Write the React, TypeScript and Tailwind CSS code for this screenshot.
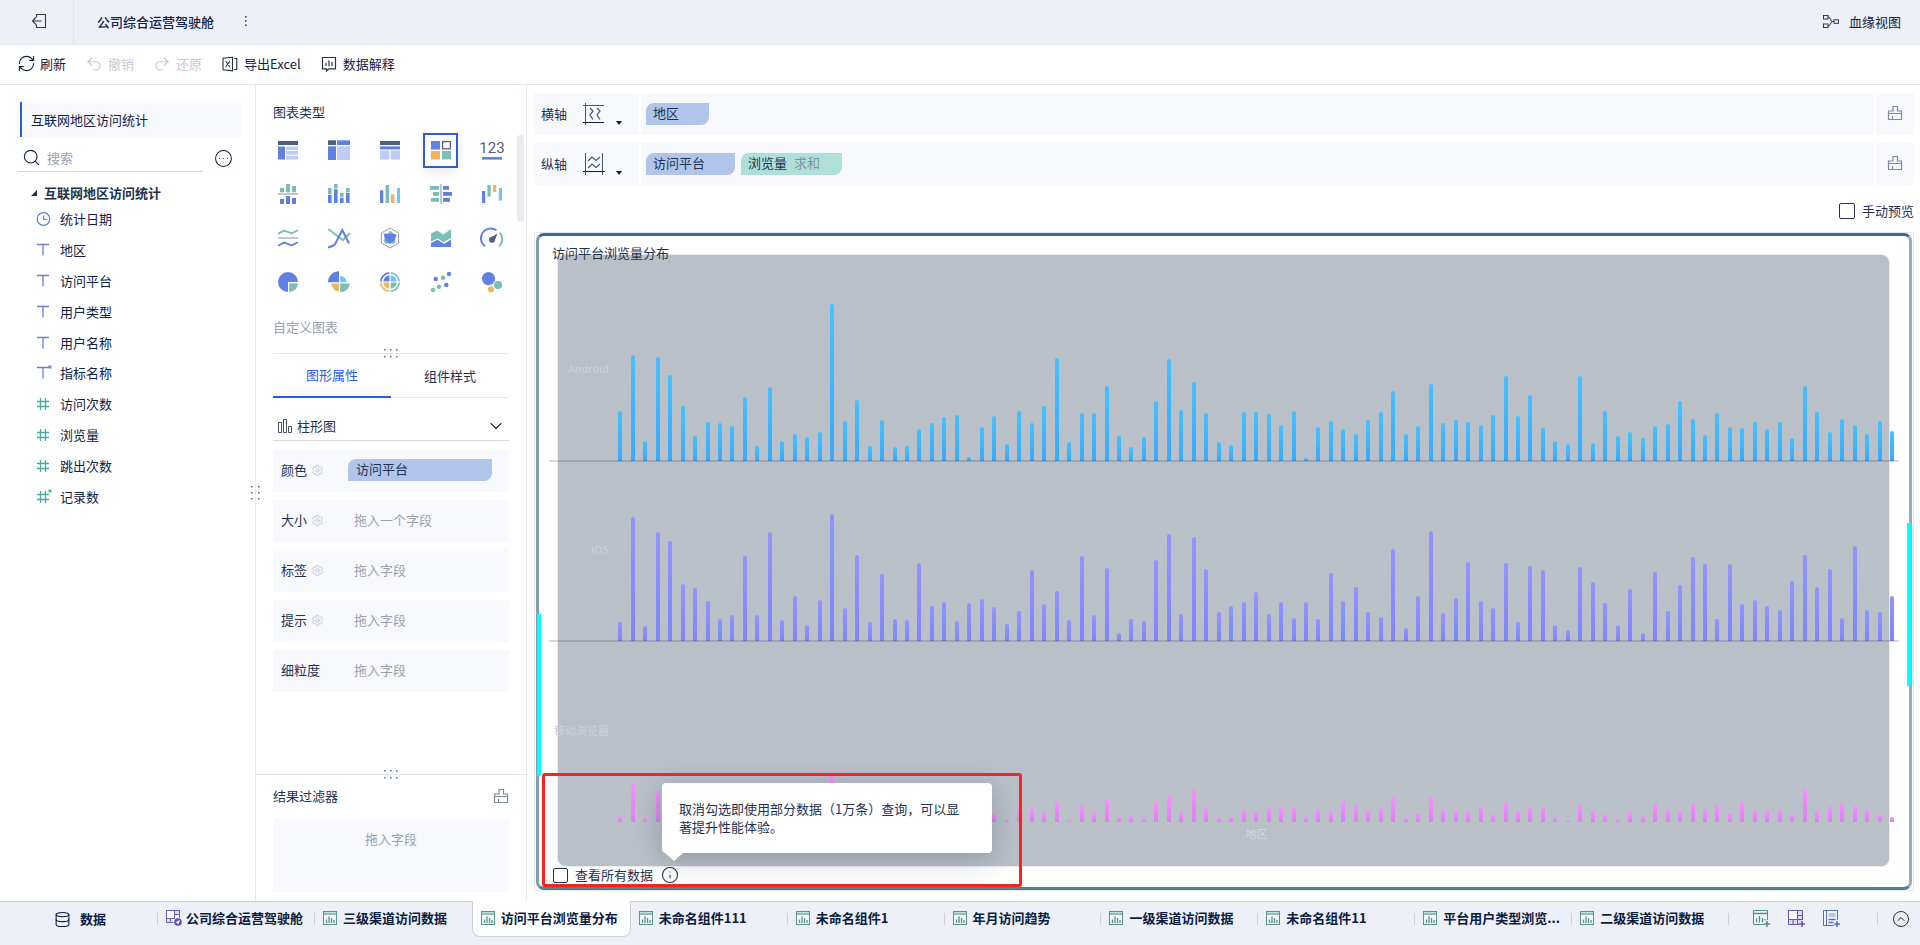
import React from "react";
import {
  ChevronDown,
  ChevronUp,
  CircleEllipsis,
  Database,
  Info,
  Redo2,
  RefreshCw,
  Search,
  Settings,
  Undo2,
} from "lucide-react";

type Children = { children: React.ReactNode };

/* ---------- data ---------- */

const ANDROID = [
  50, 106, 20, 104, 86, 55, 25, 39, 38, 35, 64, 15, 74, 20, 27, 24, 29, 157, 40, 61, 15, 41, 14, 15, 32, 38, 44, 46, 4,
  34, 45, 17, 50, 38, 55, 103, 19, 48, 48, 75, 25, 14, 24, 60, 102, 51, 79, 48, 19, 16, 49, 49, 47, 36, 50, 3, 34, 40,
  32, 27, 41, 49, 70, 27, 35, 77, 38, 41, 39, 36, 46, 85, 45, 66, 33, 20, 17, 85, 18, 50, 25, 29, 23, 35, 37, 60, 42,
  26, 48, 34, 33, 39, 32, 39, 23, 75, 49, 29, 42, 36, 27, 40, 30,
];

const IOS = [
  19, 125, 15, 110, 101, 57, 53, 40, 22, 26, 86, 26, 110, 21, 45, 16, 41, 128, 33, 87, 19, 67, 22, 21, 79, 35, 39, 20,
  38, 42, 34, 17, 30, 71, 37, 50, 21, 86, 26, 73, 8, 22, 20, 82, 108, 27, 105, 72, 29, 35, 39, 49, 27, 39, 23, 39, 22,
  68, 40, 54, 29, 24, 93, 13, 45, 111, 28, 43, 80, 40, 33, 79, 19, 75, 71, 16, 11, 74, 59, 38, 16, 52, 8, 69, 30, 56,
  85, 78, 22, 78, 37, 41, 35, 31, 60, 87, 54, 72, 23, 96, 31, 29, 45,
];

const MOBILE = [
  6, 38, 4, 31, 27, 18, 15, 12, 8, 9, 22, 7, 30, 7, 12, 6, 12, 47, 12, 25, 6, 20, 7, 7, 22, 11, 12, 8, 5, 12, 8, 3, 15,
  14, 10, 20, 2, 17, 10, 22, 5, 6, 4, 20, 26, 10, 33, 14, 4, 5, 12, 10, 14, 14, 15, 5, 13, 10, 21, 16, 12, 14, 25, 4, 9,
  25, 13, 10, 11, 16, 8, 20, 11, 15, 15, 5, 2, 17, 11, 8, 3, 10, 6, 19, 12, 11, 19, 13, 17, 9, 20, 12, 12, 13, 8, 33,
  11, 16, 19, 16, 13, 8, 5,
];

const AXIS_MAX = 181;

const SERIES = [
  { name: "Android", values: ANDROID, fill: "bg-linear-to-b from-[#45c1ff] to-[#3ba9fd]", axis: true },
  { name: "IOS", values: IOS, fill: "bg-linear-to-b from-[#8f96ff] to-[#7e85fb]", axis: true },
  { name: "移动浏览器", values: MOBILE, fill: "bg-linear-to-b from-[#f78eff] to-[#dc80f3]", axis: false },
];

const FIELDS = [
  { name: "统计日期", kind: "date" },
  { name: "地区", kind: "text" },
  { name: "访问平台", kind: "text" },
  { name: "用户类型", kind: "text" },
  { name: "用户名称", kind: "text" },
  { name: "指标名称", kind: "textStar" },
  { name: "访问次数", kind: "num" },
  { name: "浏览量", kind: "num" },
  { name: "跳出次数", kind: "num" },
  { name: "记录数", kind: "numStar" },
];

const TABS = [
  { name: "公司综合运营驾驶舱", board: true },
  { name: "三级渠道访问数据" },
  { name: "访问平台浏览量分布", active: true },
  { name: "未命名组件111" },
  { name: "未命名组件1" },
  { name: "年月访问趋势" },
  { name: "一级渠道访问数据" },
  { name: "未命名组件11" },
  { name: "平台用户类型浏览..." },
  { name: "二级渠道访问数据" },
];

/* ---------- icons ---------- */

const D = "#4e5f80";
const B = "#6181e2";
const L = "#bfccf5";
const T = "#7bbeb6";
const O = "#eeb55f";
const S = "#70c4ef";
const G = "#c2c6d2";

function R({ x, y, w, h, f }: { x: number; y: number; w: number; h: number; f: string }) {
  return <rect x={x} y={y} width={w} height={h} fill={f} />;
}

function Glyph({ children }: Children) {
  return (
    <svg viewBox="0 0 24 24" className="size-6 shrink-0" fill="none" aria-hidden="true">
      {children}
    </svg>
  );
}

const CHARTS: { name: string; icon: React.ReactNode }[] = [
  {
    name: "分组表",
    icon: (
      <Glyph>
        <R x={2} y={3} w={20} h={4} f={D} />
        <R x={2} y={8.5} w={7} h={13} f={B} />
        <R x={10} y={8.5} w={12} h={3.5} f={L} />
        <R x={10} y={13} w={12} h={3.7} f={L} />
        <R x={10} y={17.7} w={12} h={3.8} f={L} />
      </Glyph>
    ),
  },
  {
    name: "交叉表",
    icon: (
      <Glyph>
        <R x={1} y={2.3} w={8} h={4.7} f={D} />
        <R x={10} y={2.3} w={13} h={4.7} f={B} />
        <R x={1} y={8.3} w={8} h={13.7} f={B} />
        <R x={10} y={8.3} w={13} h={13.7} f={L} />
      </Glyph>
    ),
  },
  {
    name: "明细表",
    icon: (
      <Glyph>
        <R x={2} y={3} w={20} h={4} f={D} />
        <R x={2} y={8.3} w={20} h={3.2} f={B} />
        <R x={2} y={12.6} w={9.3} h={9} f={L} />
        <R x={12.7} y={12.6} w={9.3} h={9} f={L} />
      </Glyph>
    ),
  },
  {
    name: "自定义图表",
    icon: (
      <Glyph>
        <R x={2} y={3} w={9} h={8.6} f={B} />
        <rect x={13.6} y={3.6} width={7.8} height={7.2} stroke={D} strokeWidth="1.3" fill="#fff" />
        <R x={2} y={13} w={9} h={8.4} f={O} />
        <R x={13} y={13} w={9} h={8.4} f={T} />
      </Glyph>
    ),
  },
  {
    name: "指标卡",
    icon: (
      <Glyph>
        <text
          x="12"
          y="15"
          textAnchor="middle"
          fontSize="15"
          fontFamily="'Liberation Sans Narrow', 'Roboto', sans-serif"
          fill={D}
        >
          123
        </text>
        <R x={2} y={19} w={20} h={2.6} f={B} />
      </Glyph>
    ),
  },
  {
    name: "对比柱形图",
    icon: (
      <Glyph>
        <R x={4} y={6} w={4} h={4.3} f={T} />
        <R x={10} y={2} w={4} h={8.3} f={T} />
        <R x={16} y={4} w={4} h={6.3} f={T} />
        <R x={2} y={11} w={20} h={2} f={G} />
        <R x={4} y={17} w={4} h={5} f={B} />
        <R x={10} y={14} w={4} h={8} f={B} />
        <R x={16} y={16} w={4} h={6} f={B} />
      </Glyph>
    ),
  },
  {
    name: "堆积柱形图",
    icon: (
      <Glyph>
        <R x={1} y={6} w={3.6} h={6.3} f={T} />
        <R x={1} y={13} w={3.6} h={8} f={B} />
        <R x={7} y={2} w={3.6} h={4.6} f={T} />
        <R x={7} y={7.3} w={3.6} h={13.7} f={B} />
        <R x={13} y={11} w={3.6} h={4.3} f={T} />
        <R x={13} y={16} w={3.6} h={5} f={B} />
        <R x={19} y={6} w={3.6} h={4.4} f={T} />
        <R x={19} y={11} w={3.6} h={10} f={B} />
      </Glyph>
    ),
  },
  {
    name: "分区柱形图",
    icon: (
      <Glyph>
        <R x={2} y={8.3} w={3.3} h={12.7} f={B} />
        <R x={7.6} y={3} w={3.4} h={18} f={T} />
        <R x={13} y={12.3} w={3.4} h={8.7} f={O} />
        <R x={19} y={6} w={3} h={15} f={S} />
      </Glyph>
    ),
  },
  {
    name: "对比条形图",
    icon: (
      <Glyph>
        <R x={11} y={2} w={2} h={20} f={G} />
        <R x={1} y={4} w={9} h={3.8} f={T} />
        <R x={4} y={10} w={6} h={3.8} f={T} />
        <R x={2} y={16} w={8} h={3.8} f={T} />
        <R x={14} y={4} w={6} h={3.8} f={B} />
        <R x={14} y={10} w={9} h={3.8} f={B} />
        <R x={14} y={16} w={7} h={3.8} f={B} />
      </Glyph>
    ),
  },
  {
    name: "瀑布图",
    icon: (
      <Glyph>
        <R x={2} y={9} w={3.2} h={12} f={B} />
        <R x={7.4} y={3} w={3.3} h={11.7} f={T} />
        <R x={13} y={3} w={3.3} h={7} f={O} />
        <R x={18.8} y={6} w={3.2} h={12.6} f={S} />
      </Glyph>
    ),
  },
  {
    name: "折线图",
    icon: (
      <Glyph>
        <path d="M2 7.8 8 4.6l7.7 2.7L22 4.2" stroke={T} strokeWidth="1.8" />
        <R x={2} y={11} w={20} h={2} f={G} />
        <path d="M2 19.8 8 16.6l7.7 2.7 6.3-3" stroke={B} strokeWidth="1.8" />
      </Glyph>
    ),
  },
  {
    name: "组合图",
    icon: (
      <Glyph>
        <path d="M1.3 3 16 14.2 23 7" stroke={T} strokeWidth="2" />
        <path d="M1 21.5c4.2-1.2 6-1.6 7.4-4L15.3 4 22 17.5" stroke={B} strokeWidth="2" />
      </Glyph>
    ),
  },
  {
    name: "雷达图",
    icon: (
      <Glyph>
        <path d="M12 2l8.6 5v10L12 22l-8.6-5V7z" stroke="#8f9bb2" strokeWidth="1" />
        <path d="M12 4.5l6 5-1 8H7l-1.5-3z" fill={T} />
        <path d="M5.5 7.5l13 .8L16 15l-4.2 3-4.6-4z" fill={B} />
      </Glyph>
    ),
  },
  {
    name: "面积图",
    icon: (
      <Glyph>
        <path d="M2 7.5l6-3 6.5 4L22 3v9l-7.5 4.2L9 12.4l-7 3.2z" fill={T} />
        <path d="M2 17l6.5-3.2 6.5 4 7-4V21H2z" fill={B} />
      </Glyph>
    ),
  },
  {
    name: "仪表盘",
    icon: (
      <Glyph>
        <path d="M5 20.3A9.6 9.6 0 0 1 16.5 4.3" stroke={B} strokeWidth="1.9" />
        <path d="M19.6 6.6a9.6 9.6 0 0 1-.6 13.7" stroke={T} strokeWidth="1.9" />
        <circle cx="12" cy="13.8" r="3" fill={D} />
        <path d="M10.8 11.5 17.5 7.5l-3 7.5z" fill={D} />
      </Glyph>
    ),
  },
  {
    name: "饼图",
    icon: (
      <Glyph>
        <path d="M12 12V2a10 10 0 1 0 0 20z" fill={B} />
        <path d="M12 2a10 10 0 0 1 10 10H12z" fill={B} />
        <path d="M13.2 13.2H22a9 9 0 0 1-8.8 8.8z" fill={T} />
      </Glyph>
    ),
  },
  {
    name: "玫瑰图",
    icon: (
      <Glyph>
        <path d="M12 12.3H1A11 11 0 0 1 12 1.3z" fill={B} />
        <path d="M13.2 12.3V6a6 6 0 0 1 6.2 6.3z" fill={S} />
        <path d="M13.2 13.5H23a10 10 0 0 1-9.8 8.7z" fill={T} />
        <path d="M12 13.5V21.5a8 8 0 0 1-7.6-8z" fill={O} />
      </Glyph>
    ),
  },
  {
    name: "多层饼图",
    icon: (
      <Glyph>
        <path d="M11.3 2.9A9.2 9.2 0 0 0 2.8 11.3" stroke={B} strokeWidth="1.8" />
        <path d="M12.7 2.9a9.2 9.2 0 0 1 8.5 8.4" stroke={S} strokeWidth="1.8" />
        <path d="M21.2 12.7a9.2 9.2 0 0 1-8.5 8.5" stroke={T} strokeWidth="1.8" />
        <path d="M2.8 12.7a9.2 9.2 0 0 0 8.5 8.5" stroke={O} strokeWidth="1.8" />
        <path d="M11.4 11.4H5.3a6.600 6.600 0 0 1 6.100-6.100z" fill={B} />
        <path d="M12.6 11.4V5.3a6.600 6.600 0 0 1 6.100 6.100z" fill={S} />
        <path d="M12.6 12.6h6.100a6.600 6.600 0 0 1-6.100 6.100z" fill={T} />
        <path d="M11.4 12.6v6.100a6.600 6.600 0 0 1-6.100-6.100z" fill={O} />
      </Glyph>
    ),
  },
  {
    name: "散点图",
    icon: (
      <Glyph>
        <circle cx="6.7" cy="9" r="2.2" fill={B} />
        <circle cx="14" cy="7.7" r="2.2" fill={T} />
        <circle cx="20" cy="4" r="2.2" fill={B} />
        <circle cx="10" cy="16.7" r="2.2" fill={T} />
        <circle cx="17.3" cy="15" r="2.2" fill={B} />
        <circle cx="4" cy="20" r="2.2" fill={T} />
      </Glyph>
    ),
  },
  {
    name: "气泡图",
    icon: (
      <Glyph>
        <circle cx="8.5" cy="8.6" r="6.6" fill={B} />
        <circle cx="18" cy="15" r="4.1" fill={T} />
        <circle cx="11" cy="19.3" r="3" fill={O} />
      </Glyph>
    ),
  },
];

function BrushIcon() {
  return (
    <svg viewBox="0 0 16 16" className="size-4" fill="none" stroke="#7d89a1" strokeWidth="1.2" aria-hidden="true">
      <path d="M1.500 6V14.500h13V6h-4V1.500H6V6z" />
      <path d="M1.500 8.500h13M5.500 14v-3" />
    </svg>
  );
}

function ClockIcon() {
  return (
    <svg viewBox="0 0 16 16" className="size-4" fill="none" stroke="#6280cf" strokeWidth="1.2" aria-hidden="true">
      <circle cx="7.500" cy="8" r="6.300" />
      <path d="M7.500 4.500V8.500h3.500" />
    </svg>
  );
}

function TextIcon({ star }: { star?: boolean }) {
  return (
    <svg viewBox="0 0 16 16" className="size-4" fill="none" stroke="#6a80cc" strokeWidth="1.3" aria-hidden="true">
      <path d="M1 2.500h12M7 2.500v11" />
      {star && <path d="M14 0v4M12.300 1l3.400 2M15.700 1l-3.400 2" strokeWidth="1" />}
    </svg>
  );
}

function HashIcon({ star }: { star?: boolean }) {
  return (
    <svg viewBox="0 0 16 16" className="size-4" fill="none" stroke="#45ada0" strokeWidth="1.3" aria-hidden="true">
      <path d="M1 5.500h12M1 10.500h12M4.500 2v12M9.500 2v12" />
      {star && <path d="M14 0v4M12.300 1l3.400 2M15.700 1l-3.400 2" strokeWidth="1" />}
    </svg>
  );
}

function FieldIcon({ kind }: { kind: string }) {
  if (kind === "date") return <ClockIcon />;
  if (kind.startsWith("text")) return <TextIcon star={kind === "textStar"} />;
  return <HashIcon star={kind === "numStar"} />;
}

function SheetIcon() {
  return (
    <svg viewBox="0 0 14 14" className="size-[14px] shrink-0" fill="none" stroke="#5b9389" aria-hidden="true">
      <rect x=".5" y=".5" width="13" height="13" fill="#f1f8f7" />
      <rect x=".5" y=".5" width="13" height="2.6" fill="#bfe0da" />
      <path d="M3.500 12V8.500M6 12V5.500M8.500 12V7M11 12V9" strokeWidth="1.3" />
    </svg>
  );
}

function BoardIcon() {
  return (
    <svg viewBox="0 0 16 16" className="size-4 shrink-0" fill="none" stroke="#6c5fb4" aria-hidden="true">
      <path d="M.5.5h8v8h-8zM8.500.5h5v4h-5zM.5 8.500h4v4h-4zM4.500 8.500v4h3M13.500 4.500v3" fill="#dcd8f5" />
      <rect x=".5" y=".5" width="8" height="8" fill="#fff" />
      <circle cx="12" cy="12" r="3.800" fill="#5f4fb8" stroke="none" />
      <path d="M9.800 12.200 14.200 9.800 12.400 14.300z" fill="#fff" stroke="none" />
    </svg>
  );
}

/* ---------- small parts ---------- */

function Pill({ tone = "blue", className = "", children }: Children & { tone?: "blue" | "green"; className?: string }) {
  const bg = tone === "blue" ? "bg-[#b0c5e9]" : "bg-[#aee0d9]";
  return (
    <div className={`flex h-[22px] items-center rounded-tl-lg rounded-br-lg pb-[2px] ${bg} ${className}`}>
      {children}
    </div>
  );
}

function Dots({ vertical = false }: { vertical?: boolean }) {
  return (
    <svg
      viewBox={vertical ? "0 0 10 16" : "0 0 16 10"}
      className={vertical ? "h-4 w-[10px]" : "h-[10px] w-4"}
      fill="#5a6a88"
      aria-hidden="true"
    >
      {vertical
        ? [0, 1, 2].flatMap((i) => [
            <rect key={`a${i}`} x="1" y={1 + i * 6} width="1.500" height="1.500" />,
            <rect key={`b${i}`} x="8" y={1 + i * 6} width="1.500" height="1.500" />,
          ])
        : [0, 1, 2].flatMap((i) => [
            <rect key={`a${i}`} x={1 + i * 6} y="1" width="1.500" height="1.500" />,
            <rect key={`b${i}`} x={1 + i * 6} y="8" width="1.500" height="1.500" />,
          ])}
    </svg>
  );
}

function ToolButton({ icon, label, disabled }: { icon: React.ReactNode; label: string; disabled?: boolean }) {
  return (
    <button type="button" disabled={disabled} className="flex items-center gap-[6px] disabled:text-[#c6cbd4]">
      <span className="flex w-4 justify-center">{icon}</span>
      <span>{label}</span>
    </button>
  );
}

function AxisRow({ label, icon, children }: Children & { label: string; icon: React.ReactNode }) {
  return (
    <div className="flex h-[42px] gap-[2px]">
      <div className="flex w-[105px] items-center bg-[#f8f9fd] pl-[7px]">
        <span>{label}</span>
        <button type="button" aria-label={`${label}设置`} className="ml-4 flex items-end gap-[11px]">
          {icon}
          <svg viewBox="0 0 6 4" className="h-1 w-[6px]" fill="#0d2148" aria-hidden="true">
            <path d="M0 0h6L3 4z" />
          </svg>
        </button>
      </div>
      <div className="flex min-w-0 flex-1 items-center gap-[6px] bg-[#f8f9fd] pl-[5px]">{children}</div>
      <button type="button" aria-label={`清空${label}`} className="flex w-[38px] items-center justify-center bg-[#f8f9fd] pb-[2px]">
        <BrushIcon />
      </button>
    </div>
  );
}

function AttrRow({ label, gear = true, children }: Children & { label: string; gear?: boolean }) {
  return (
    <div className="flex h-[42px] items-center bg-[#f8f9fd] px-2 pb-[2px]">
      <div className="flex w-[67px] items-center gap-1">
        <span>{label}</span>
        {gear && <Settings className="size-[13px] text-[#bcc1cc]" strokeWidth={1.6} />}
      </div>
      {children}
    </div>
  );
}

/* ---------- regions ---------- */

function Header() {
  return (
    <header className="flex h-[45px] shrink-0 items-center border-b border-[#e1e5ee] bg-[#edf0f6]">
      <button
        type="button"
        aria-label="退出"
        className="flex h-full w-[74px] items-center justify-center border-r border-[#e1e5ee] pb-[2px] pl-1"
      >
        <svg viewBox="0 0 16 16" className="size-4" fill="none" stroke="#2f3848" strokeWidth="1.1" aria-hidden="true">
          <path d="M5.500 4.500v-3h9v13h-9v-3M1.500 8H10.500M4.800 4.500 1.500 8l3.300 3.500" />
        </svg>
      </button>
      <h1 className="pl-[23px] font-medium">公司综合运营驾驶舱</h1>
      <button type="button" aria-label="更多" className="ml-[30px] pb-[2px]">
        <svg viewBox="0 0 4 12" className="h-3 w-1" fill="#3b465c" aria-hidden="true">
          <rect x="1" y="1" width="1.600" height="1.600" />
          <rect x="1" y="5.200" width="1.600" height="1.600" />
          <rect x="1" y="9.400" width="1.600" height="1.600" />
        </svg>
      </button>
      <button type="button" className="mr-[19px] ml-auto flex items-center gap-[9px]">
        <svg viewBox="0 0 18 16" className="h-4 w-[18px]" fill="none" stroke="#2c3447" aria-hidden="true">
          <rect x="1.500" y="1.500" width="4.500" height="3.500" />
          <rect x="1.500" y="10" width="4.500" height="3.500" />
          <rect x="12" y="5.800" width="4.500" height="3.500" />
          <path d="M6 3.200h1.200l2.800 4.300h2M6 11.800h1.200L10 7.500" />
        </svg>
        <span>血缘视图</span>
      </button>
    </header>
  );
}

function Toolbar() {
  return (
    <div className="flex h-10 shrink-0 items-center border-b border-[#e4e7f0] pr-4 pb-[2px] pl-[18px]">
      <div className="flex items-center gap-5">
        <ToolButton label="刷新" icon={<RefreshCw className="size-[19px] shrink-0" strokeWidth={1.4} />} />
        <ToolButton label="撤销" disabled icon={<Undo2 className="size-[18px] shrink-0" strokeWidth={1.6} />} />
        <ToolButton label="还原" disabled icon={<Redo2 className="size-[18px] shrink-0" strokeWidth={1.6} />} />
        <ToolButton
          label="导出Excel"
          icon={
            <svg viewBox="0 0 16 16" className="size-4" fill="none" stroke="#26304a" strokeWidth="1.1" aria-hidden="true">
              <path d="M10.500 1.200l-9.500 1v11.600l9.500 1zM12.200 2.500h2.600v11h-2.600M3.600 5 8 11M8 5 3.600 11" />
            </svg>
          }
        />
        <ToolButton
          label="数据解释"
          icon={
            <svg viewBox="0 0 16 16" className="size-4" fill="none" stroke="#26304a" strokeWidth="1.200" aria-hidden="true">
              <path d="M1.500 1.500h13v11.300H8L5.500 15v-2.200h-4zM5 10V7M8 10V4.500M11 10V6" />
            </svg>
          }
        />
      </div>
    </div>
  );
}

function DataPanel() {
  return (
    <aside className="relative w-64 shrink-0 border-r border-[#e4e6f0] pt-[17px]">
      <div className="mr-[13px] ml-5 flex h-[35px] items-center border-l-2 border-[#2b5fd9] bg-[#f8f9fd] pl-[9px]">
        互联网地区访问统计
      </div>
      <div className="mt-[7px] mr-[22px] ml-[18px] flex items-center gap-[11px]">
        <label className="flex h-7 w-[188px] items-center gap-[6px] border-b border-[#d5d8e0] pl-1">
          <Search className="size-[19px] shrink-0" strokeWidth={1.4} />
          <input
            type="text"
            aria-label="搜索"
            placeholder="搜索"
            className="w-full min-w-0 bg-transparent leading-5 outline-none placeholder:text-[#9aa2b1]"
          />
        </label>
        <button type="button" aria-label="更多">
          <CircleEllipsis className="size-[19px]" strokeWidth={1.3} />
        </button>
      </div>
      <div className="mt-[10px] flex h-[22px] items-center gap-[7px] pl-[31px] font-bold text-[#23324c]">
        <svg viewBox="0 0 6 6" className="size-[6px]" fill="#23324c" aria-hidden="true">
          <path d="M6 0v6H0z" />
        </svg>
        互联网地区访问统计
      </div>
      <ul className="grid h-[308px] auto-rows-fr">
        {FIELDS.map((f) => (
          <li key={f.name} className="flex items-center gap-2 pl-[36px]">
            <FieldIcon kind={f.kind} />
            {f.name}
          </li>
        ))}
      </ul>
      <div className="absolute top-[400px] -right-[5px]">
        <Dots vertical />
      </div>
    </aside>
  );
}

function ChartPanel() {
  return (
    <section className="flex w-[271px] shrink-0 flex-col border-r border-[#e4e6f0] text-[#1f3254]">
      <h2 className="pt-[17px] pl-[17px] leading-5">图表类型</h2>
      <div className="mt-[6px] flex pr-[2px] pl-[7px]">
        <div className="grid flex-1 grid-cols-5">
          {CHARTS.map((c, i) => (
            <div key={c.name} className="flex h-11 items-center justify-center">
              <button
                type="button"
                aria-label={c.name}
                className={
                  i === 3
                    ? "flex size-[35px] items-center justify-center border-2 border-[#2b5fd9] bg-white shadow-[0_4px_12px_rgba(0,0,0,0.08)]"
                    : "flex size-[35px] items-center justify-center"
                }
              >
                {c.icon}
              </button>
            </div>
          ))}
        </div>
        <div className="mt-[7px] h-[87px] w-[7px] rounded-full bg-[#eaebf2]" />
      </div>
      <div className="relative mr-[17px] ml-[17px] border-b border-[#e6e8ee] pt-[13px] pb-4 leading-5 text-[#9aa2b1]">
        自定义图表
        <div className="absolute -bottom-[5px] left-1/2 -translate-x-1/2">
          <Dots />
        </div>
      </div>
      <div className="mr-[17px] ml-[17px] flex h-11 border-b border-[#e6e8ee]" role="tablist">
        <button
          type="button"
          role="tab"
          aria-selected="true"
          className="h-11 flex-1 border-b-2 border-[#2b5fd9] text-[#2b5fd9]"
        >
          图形属性
        </button>
        <button type="button" role="tab" aria-selected="false" className="flex-1">
          组件样式
        </button>
      </div>
      <button
        type="button"
        className="mt-4 mr-[17px] ml-[17px] flex h-[27px] items-center border-b border-[#d8dbe4] pr-[3px] pb-[2px] pl-[4px]"
      >
        <svg viewBox="0 0 16 16" className="size-4" fill="none" stroke="#43506a" aria-hidden="true">
          <path d="M1.500 4.500h3v10h-3zM6.500 1.500h3v13h-3zM11.500 8.500h3v6h-3z" />
        </svg>
        <span className="ml-1">柱形图</span>
        <ChevronDown className="ml-auto size-5" strokeWidth={1.4} />
      </button>
      <div className="mt-[9px] mr-[17px] ml-[17px] flex flex-col gap-2">
        <AttrRow label="颜色">
          <Pill className="w-[144px] pl-2">访问平台</Pill>
        </AttrRow>
        <AttrRow label="大小">
          <span className="pl-[6px] text-[#9aa2b1]">拖入一个字段</span>
        </AttrRow>
        <AttrRow label="标签">
          <span className="pl-[6px] text-[#9aa2b1]">拖入字段</span>
        </AttrRow>
        <AttrRow label="提示">
          <span className="pl-[6px] text-[#9aa2b1]">拖入字段</span>
        </AttrRow>
        <AttrRow label="细粒度" gear={false}>
          <span className="pl-[6px] text-[#9aa2b1]">拖入字段</span>
        </AttrRow>
      </div>
      <div className="relative mt-auto border-t border-[#e4e6f0] px-[17px] pt-[11px] pb-[9px]">
        <div className="absolute -top-[6px] left-1/2 -translate-x-1/2">
          <Dots />
        </div>
        <div className="flex h-5 items-center justify-between">
          <h2>结果过滤器</h2>
          <button type="button" aria-label="清空结果过滤器">
            <BrushIcon />
          </button>
        </div>
        <div className="mt-[13px] h-[73px] bg-[#f8f9fd] pt-[10px] text-center leading-5 text-[#9aa2b1]">拖入字段</div>
      </div>
    </section>
  );
}

function Band({ name, values, fill, axis }: (typeof SERIES)[number]) {
  return (
    <div className="relative flex min-h-0 flex-1">
      <div className="flex w-[65px] shrink-0 items-center justify-end pr-[5px] pb-1 text-[11px] whitespace-nowrap text-[#cdd3da]">
        {name}
      </div>
      <div className="flex min-w-0 flex-1 items-end">
        {values.map((v, i) => (
          <div key={i} className="flex h-full flex-1 items-end justify-center">
            <div className={`w-1 rounded-t-[2px] ${fill}`} style={{ height: `${(v / AXIS_MAX) * 100}%` }} />
          </div>
        ))}
      </div>
      {axis && <div className="absolute inset-x-0 -bottom-[1px] h-[2px] bg-black/15" />}
    </div>
  );
}

function ChartCard() {
  return (
    <div className="flex min-h-0 flex-1 border border-[#e3e6ee] px-[1px]">
      <div className="relative flex min-w-0 flex-1 flex-col rounded-lg border-[3px] border-t-[#3c6a80] border-r-[#94afb8] border-b-[#54808f] border-l-[#7f9fa9] bg-white px-[10px] pt-[7px] pb-[2px]">
        <div className="absolute top-[19px] right-[20px] bottom-[21px] left-[19px] rounded-lg bg-[#b9c0c8] shadow-[0_0_2px_rgba(140,150,160,0.7)]" />
        <div className="absolute bottom-[111px] -left-[2px] h-[162px] w-1 bg-[#0ff]" />
        <div className="absolute top-[287px] -right-[2px] h-[163px] w-1 bg-[#0ff]" />

        <h2 className="relative pl-[3px] leading-5">访问平台浏览量分布</h2>
        <div className="relative mt-[17px] flex min-h-0 flex-1 flex-col">
          {SERIES.map((s) => (
            <Band key={s.name} {...s} />
          ))}
        </div>
        <div className="relative pl-[65px] text-center text-[11px] leading-[22px] text-[#d3d8de]">地区</div>
        <div className="relative mt-[21px] flex h-5 items-center pl-1">
          <label className="flex items-center gap-[7px]">
            <input type="checkbox" className="size-[15px] appearance-none rounded-[2px] border border-[#1f3254] bg-white" />
            查看所有数据
          </label>
          <button type="button" aria-label="说明" className="ml-2">
            <Info className="size-[18px]" strokeWidth={1.4} />
          </button>
        </div>

        <div
          role="tooltip"
          className="absolute bottom-[34px] left-[123px] w-[330px] rounded bg-white py-[17px] pr-[20px] pl-[17px] leading-[18px] shadow-[0_6px_28px_rgba(20,30,50,0.25)]"
        >
          取消勾选即使用部分数据（1万条）查询，可以显著提升性能体验。
          <svg viewBox="0 0 18 8" className="absolute top-full left-[3px] h-2 w-[18px]" fill="#fff" aria-hidden="true">
            <path d="M0 0h18L9 8z" />
          </svg>
        </div>
        <div className="pointer-events-none absolute bottom-0 left-[3px] h-[114px] w-[480px] rounded-[3px] border-[3px] border-[#fb231c]" />
      </div>
    </div>
  );
}

function Workspace() {
  return (
    <main className="flex min-w-0 flex-1 flex-col pt-2 pr-[6px] pb-[10px] pl-[7px] text-[#1f3254]">
      <div className="flex flex-col gap-2">
        <AxisRow
          label="横轴"
          icon={
            <svg viewBox="0 0 22 22" className="size-[22px]" fill="none" stroke="#43557a" aria-hidden="true">
              <path d="M0 2.500h21M2.500 0v22" />
              <path d="M0 19.500h21" stroke="#0d2148" />
              <path d="M7 5l3 3-3 4 3 4.500M14 5l3 3-3 4 3 4.500" strokeWidth="1.200" />
            </svg>
          }
        >
          <Pill className="w-[63px] pl-[7px]">地区</Pill>
        </AxisRow>
        <AxisRow
          label="纵轴"
          icon={
            <svg viewBox="0 0 22 22" className="size-[22px]" fill="none" stroke="#43557a" aria-hidden="true">
              <path d="M2.500 0v22M19.500 0v22" />
              <path d="M0 18.500h22" stroke="#0d2148" />
              <path d="M5 8l4-4 4 3.500L17 4M5 15l4-4 4 3.500L17 11" strokeWidth="1.200" />
            </svg>
          }
        >
          <Pill className="w-[89px] pl-[7px]">访问平台</Pill>
          <Pill tone="green" className="w-[101px] pl-[7px]">
            浏览量<span className="ml-[7px] text-[#8291a4]">求和</span>
          </Pill>
        </AxisRow>
      </div>
      <div className="flex h-[47px] shrink-0 items-center justify-end pt-1">
        <label className="flex items-center gap-[7px]">
          <input type="checkbox" className="size-4 appearance-none rounded-[2px] border border-[#1f3254] bg-white" />
          手动预览
        </label>
      </div>
      <ChartCard />
    </main>
  );
}

function AddIcon({ kind }: { kind: "chart" | "board" | "report" }) {
  const tone = kind === "chart" ? "#4f9085" : kind === "board" ? "#6555b5" : "#5370b5";
  return (
    <svg viewBox="0 0 18 18" className="size-[18px]" fill="none" stroke={tone} aria-hidden="true">
      {kind === "chart" && (
        <>
          <path d="M11 14.500H.5V.5h14V10" fill="#f1f8f7" />
          <path d="M.5 3.500h14M3.500 12.500v-4M6.500 12.500V6M9.500 12.500V8M12 10.500V9" strokeWidth="1.300" />
        </>
      )}
      {kind === "board" && (
        <>
          <path d="M11 14.500H.5V.5h14V10" fill="#dcd8f7" />
          <path d="M.5.5h9v9h-9z" fill="#fff" />
          <path d="M9.500 5.500h5M5 9.500v5M9.500 9.500v5M9.500 9.500h5" />
        </>
      )}
      {kind === "report" && (
        <>
          <path d="M11 15.500H.5V.5h14V10" fill="#f2f5fc" />
          <path d="M3.500.5v15" />
          <path d="M5.500 3h7v4h-7z" fill="#b3c7ea" stroke="none" />
          <path d="M5.500 9.500h7M5.500 12.500h5" strokeWidth="1.300" />
        </>
      )}
      <path d="M14 11v6M11 14h6" strokeWidth="1.600" />
    </svg>
  );
}

function BottomTabs() {
  return (
    <footer className="flex h-11 shrink-0 items-start border-t border-[#cbd0dc] bg-[#edf0f6] font-bold text-[#0a1c42]">
      <div className="flex h-[34px] w-[158px] items-center">
        <button type="button" className="flex flex-1 items-center gap-[9px] pl-[54px] font-bold">
          <Database className="size-[17px]" strokeWidth={1.5} />
          数据
        </button>
        <span className="h-3 w-px bg-[#cdd1dc]" />
      </div>
      <nav className="-mt-px flex min-w-0 flex-1">
        {TABS.map((t, i) => (
          <div
            key={t.name}
            className={
              t.active
                ? "flex h-9 min-w-0 flex-1 items-center rounded-b-lg border border-t-0 border-[#cbd0dc] bg-white"
                : "flex h-9 min-w-0 flex-1 items-center"
            }
          >
            <a
              href="#"
              className={`flex min-w-0 flex-1 items-center pb-[2px] pl-2 ${t.board ? "gap-1" : "gap-[6px]"}`}
            >
              {t.board ? <BoardIcon /> : <SheetIcon />}
              <span className="whitespace-nowrap">{t.name}</span>
            </a>
            {i !== 1 && i !== 2 && <span className="h-3 w-px shrink-0 bg-[#cdd1dc]" />}
          </div>
        ))}
      </nav>
      <div className="flex h-[34px] w-[191px] items-center pl-6">
        <div className="flex gap-[17px]">
          <button type="button" aria-label="添加组件">
            <AddIcon kind="chart" />
          </button>
          <button type="button" aria-label="添加仪表板">
            <AddIcon kind="board" />
          </button>
          <button type="button" aria-label="添加分析文档">
            <AddIcon kind="report" />
          </button>
        </div>
        <span className="ml-[36px] h-3 w-px bg-[#cdd1dc]" />
        <button
          type="button"
          aria-label="展开"
          className="ml-[15px] flex size-4 items-center justify-center rounded-full border border-[#26304a]"
        >
          <ChevronUp className="size-3" strokeWidth={2} />
        </button>
      </div>
    </footer>
  );
}

export default function App() {
  return (
    <div className="flex h-screen flex-col overflow-hidden bg-white font-['Noto_Sans_CJK_SC','Noto_Sans',sans-serif] text-[13px] leading-5 text-[#0f2147]">
      <Header />
      <Toolbar />
      <div className="flex min-h-0 flex-1">
        <DataPanel />
        <ChartPanel />
        <Workspace />
      </div>
      <BottomTabs />
    </div>
  );
}
